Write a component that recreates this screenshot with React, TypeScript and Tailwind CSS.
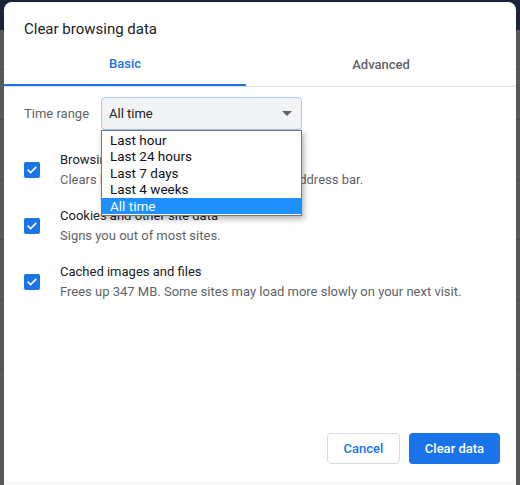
import React from "react";

const font = { fontFamily: "Roboto, 'Liberation Sans', Arial, sans-serif" };

function Check() {
  return (
    <div className="w-4 h-4 rounded-[2px] bg-[#1a73e8] flex items-center justify-center shrink-0">
      <svg width="12" height="12" viewBox="0 0 24 24" fill="none">
        <path d="M4.5 12.5l4.8 4.8L19.5 7" stroke="white" strokeWidth="3.2" strokeLinecap="square" />
      </svg>
    </div>
  );
}

function Row({ title, sub }: { title: string; sub: string }) {
  return (
    <div className="flex items-center gap-5">
      <Check />
      <div className="flex flex-col text-[13px] leading-5">
        <span className="text-[#202124]">{title}</span>
        <span className="text-[#5f6368]">{sub}</span>
      </div>
    </div>
  );
}

export default function App() {
  const options = ["Last hour", "Last 24 hours", "Last 7 days", "Last 4 weeks", "All time"];
  return (
    <div className="relative w-[520px] h-[485px] overflow-hidden bg-[#595959]" style={font}>
      {/* dimmed page behind */}
      <div className="h-[30px] bg-[#1b233a]" />
      <div className="flex flex-col text-[#2a2a2a] text-[13px]">
        <div className="h-[40px] border-b border-[#4d4d4d]" />
        <div className="h-[50px] border-b border-[#4d4d4d]" />
        <div className="h-[60px] border-b border-[#4d4d4d]" />
        <div className="h-[60px] border-b border-[#4d4d4d]" />
        <div className="h-[60px] border-b border-[#4d4d4d]" />
        <div className="h-[70px] border-b border-[#4d4d4d]" />
      </div>

      {/* dialog */}
      <div className="absolute left-[4px] top-[2px] w-[512px] h-[490px] bg-white rounded-t-[8px] flex flex-col">
        <div className="px-5 pt-[17px] text-[15px] leading-5 text-[#202124]">Clear browsing data</div>
        <div className="mt-[13px] flex border-b border-[#e0e0e0]">
          <div className="w-[242px] h-[34px] pb-[8px] flex items-center justify-center text-[13px] font-medium text-[#1a73e8] border-b-2 border-[#1a73e8] -mb-px">
            Basic
          </div>
          <div className="flex-1 h-[34px] pb-[8px] flex items-center justify-center text-[13px] font-medium text-[#5f6368]">
            Advanced
          </div>
        </div>

        <div className="relative flex-1 flex flex-col px-5 pt-[10px]">
          <div className="flex items-center">
            <span className="w-[77px] text-[13px] text-[#5f6368]">Time range</span>
            <div className="relative w-[201px] h-[33px] rounded-[4px] bg-[#f1f3f4] border border-[#a8c7fa] flex items-center pl-[7px] text-[13px] text-[#202124]">
              All time
              <svg className="absolute right-[9px] top-[13px]" width="10" height="5" viewBox="0 0 10 5">
                <path d="M0 0h10L5 5z" fill="#5f6368" />
              </svg>
            </div>
          </div>

          <div className="mt-[20px] flex flex-col gap-[16px]">
            <Row title="Browsing history" sub="Clears history and autocompletes in the address bar." />
            <Row title="Cookies and other site data" sub="Signs you out of most sites." />
            <Row title="Cached images and files" sub="Frees up 347 MB. Some sites may load more slowly on your next visit." />
          </div>

          <div className="flex-1" />
          <div className="flex justify-end gap-[9px] pr-[16px] mb-[17px] -mr-5">
            <button className="w-[73px] h-[31px] rounded-[4px] border border-[#dadce0] bg-white text-[13px] font-medium text-[#1a73e8]">
              Cancel
            </button>
            <button className="w-[91px] h-[31px] rounded-[4px] bg-[#1a73e8] text-[13px] font-medium text-white">
              Clear data
            </button>
          </div>
          <div className="h-[11px] -mx-5 bg-[#f8f9fa]" />

          {/* dropdown list */}
          <div className="absolute left-[97px] top-[43px] w-[201px] bg-white border border-[#767676] shadow-[2px_3px_6px_rgba(0,0,0,0.3)] flex flex-col py-px">
            {options.map((o, i) => (
              <div
                key={o}
                className={
                  i === options.length - 1
                    ? "h-[16.4px] flex items-center pl-[8px] text-[13.5px] bg-[#1e90ff] text-white"
                    : "h-[16.4px] flex items-center pl-[8px] text-[13.5px] text-[#10101a]"
                }
              >
                {o}
              </div>
            ))}
          </div>
        </div>
      </div>
    </div>
  );
}
